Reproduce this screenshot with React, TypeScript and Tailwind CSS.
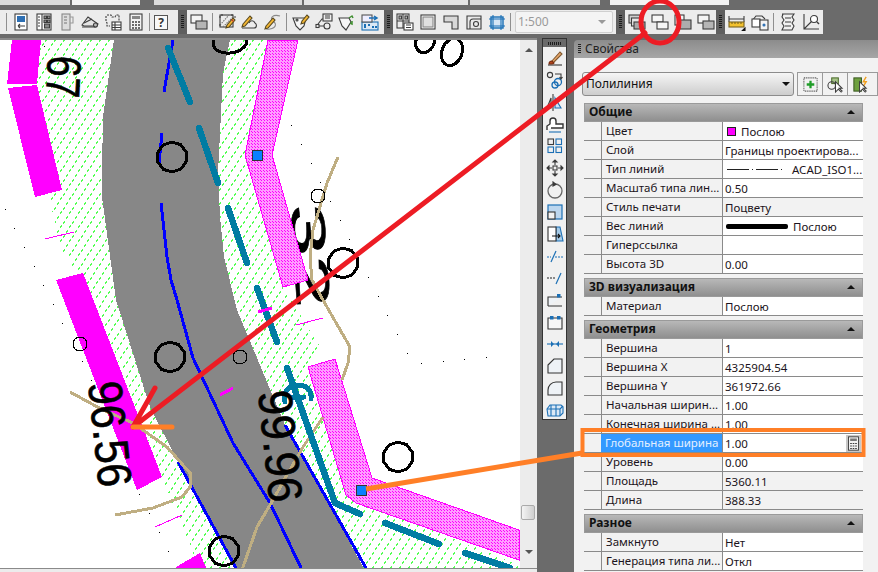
import React from "react";

const F = { fontFamily: '"Noto Sans", "DejaVu Sans", sans-serif' };

function I({ children, s = 18 }: { children: React.ReactNode; s?: number }) {
  return (
    <svg width={s} height={s} viewBox="0 0 18 18" fill="none" stroke="#3c3c3c" strokeWidth="1.1">
      {children}
    </svg>
  );
}
const Slot = ({ children }: { children: React.ReactNode }) => (
  <div className="w-[23px] h-full flex items-center justify-center shrink-0">{children}</div>
);
const Sep = () => <div className="w-px h-[18px] bg-[#8f8f8f] mx-[2px] shrink-0" />;
const Grip = () => (
  <div className="w-[9px] h-full bg-[#5f5f5f] shrink-0 flex items-center justify-center">
    <div className="w-[3px] h-[14px] bg-[repeating-linear-gradient(#1c1c1c_0,#1c1c1c_1px,#5f5f5f_1px,#5f5f5f_2px)]" />
  </div>
);
const Pencil = () => (
  <>
    <path d="M8 15l1-3 6-7 2 2-6 7z" fill="#f2b632" stroke="#5a4a20" />
    <path d="M13.5 6.5l2 2" stroke="#c0392b" />
  </>
);
const Over = ({ a = false }: { a?: boolean }) => (
  <>
    <rect x="1" y="2" width="11" height="8" fill={a ? "#d8d8d8" : "#f4f4f4"} />
    <rect x="6" y="8" width="11" height="8" fill={a ? "#f4f4f4" : "#b5b5b5"} />
  </>
);

const group1 = [
  <I key="a"><rect x="3" y="1" width="12" height="16" fill="#fff" /><rect x="5" y="3" width="8" height="6" fill="#2d6fb3" stroke="none" /><path d="M6 13h7M6 13l2-2M6 13l2 2" /></I>,
  <I key="b"><rect x="2" y="1" width="14" height="16" fill="#fff" /><path d="M7 1v16" /><rect x="9" y="3" width="2.5" height="2.5" fill="#999" /><rect x="12.5" y="3" width="2.5" height="2.5" fill="#999" /><rect x="9" y="7" width="2.5" height="2.5" fill="#999" /><rect x="12.5" y="7" width="2.5" height="2.5" fill="#999" /><rect x="9.5" y="11" width="5" height="4" fill="#888" /><path d="M3 4h2M3 7h2M3 10h2M3 13h2" /></I>,
  <I key="c"><rect x="4" y="1" width="8" height="16" fill="#ddd" stroke="#888" /><path d="M12 4h3v6h-3" stroke="#999" /><path d="M6 4h3M6 7h3M6 10h3" stroke="#777" /></I>,
  <I key="d"><path d="M1 12l6-8 10 7-3 2H3z" fill="#e4e4e4" /><path d="M1 14h14M3 10l8-4" /><circle cx="14.5" cy="12" r="2" fill="#bbb" /></I>,
  <I key="e"><path d="M3 2h4l1 2h3l1-2h3v6M2 3v5l1 2v3h3" strokeDasharray="2 1" /><rect x="8" y="9" width="9" height="8" fill="#fff" /><path d="M8 12h9M8 14.5h9M11 9v8" /></I>,
  <I key="f"><rect x="3" y="1" width="12" height="16" fill="#f2f2f2" /><rect x="5" y="3" width="8" height="3" fill="#888" stroke="none" /><path d="M5 9h2M8 9h2M11 9h2M5 12h2M8 12h2M11 12h2M5 15h2M8 15h2M11 15h2" strokeWidth="1.4" /></I>,
];
const group2 = [
  <I key="a"><rect x="2" y="2" width="13" height="12" /><path d="M2 12l9-10M5 14l10-10M8 14l7-6" stroke="#777" strokeDasharray="1.5 1" /><path d="M1 4h2M4 1v2M14 1v2M16 4h2M1 12h2" /><Pencil /></I>,
  <I key="b"><path d="M1 15h12c3 0 3-4 1-5-1-3-5-3-6 0" /><path d="M2 11l7-8 2 2-7 8-3 1z" fill="#f2b632" stroke="#5a4a20" /></I>,
  <I key="c"><path d="M16 3C9 1 5 5 9 8s3 7-3 8-4-2-3-3" stroke="#8a8a8a" /><path d="M2 13l7-8 2 2-7 8-3 1z" fill="#f2b632" stroke="#5a4a20" /></I>,
];
const group3 = [
  <I key="a"><path d="M1 5h13l-2 8-4 4-4-4z" fill="#f6f6f6" /><circle cx="5" cy="7" r="1" /><path d="M9 11l1-3 5-6 2 2-5 6z" fill="#f2b632" stroke="#5a4a20" /></I>,
  <I key="b"><rect x="8" y="1" width="9" height="7" fill="#eee" /><path d="M10 3h5M10 5h5" /><circle cx="12" cy="13" r="3" /><rect x="1" y="11.5" width="3" height="3" /><path d="M4 13h5M3 11l4-5h1" /></I>,
  <I key="c"><path d="M1 5h10l2 4-5 8-4-4z" fill="#f6f6f6" /><path d="M11 5l3-2 1 2M14 8v3l-2-1" stroke="#3f8f2f" strokeWidth="1.5" /></I>,
  <I key="d"><rect x="1" y="9" width="16" height="8" fill="#dbe8f5" stroke="#1b6fb5" /><rect x="1" y="2" width="10" height="7" fill="#eef" stroke="#555" /><path d="M8 5h7M13 3l3 2-3 2" stroke="#1b6fb5" strokeWidth="1.5" /><path d="M3 12h2M7 12h2M11 14h2M14 14h2M3 14h2" stroke="#1b6fb5" strokeWidth="2" /></I>,
];
const group4 = [
  <I key="a"><rect x="1" y="1" width="12" height="14" /><path d="M7 1v14M1 8h12" /><rect x="3" y="3" width="2.5" height="3" fill="#bbb" /><rect x="9" y="3" width="2.5" height="3" fill="#bbb" /><rect x="8" y="10" width="9" height="7" fill="#fff" /><path d="M10 12h5M10 14.500h5" /></I>,
  <I key="b"><rect x="2" y="2" width="14" height="14" fill="#fff" /><rect x="4" y="4" width="10" height="10" fill="#e0e0e0" stroke="#888" /></I>,
  <I key="c"><path d="M2 3h14v13h-6V9H2z" fill="#d8d8d8" /></I>,
  <I key="d"><path d="M2 3h14v13H2z" fill="#e8e8e8" /><path d="M5 16V9a3 3 0 013-3h8" /><circle cx="11" cy="11" r="2.500" /></I>,
  <I key="e"><rect x="3" y="4" width="12" height="11" fill="#d6e6f6" stroke="#1b6fb5" strokeWidth="1.4" /><path d="M1 6h16M1 13h16M5 2v15M13 2v15" stroke="#1b6fb5" /></I>,
];
const group5 = [
  <I key="a"><rect x="1" y="2" width="11" height="8" fill="#d0d0d0" /><rect x="3.500" y="5" width="11" height="8" fill="#e6e6e6" /><rect x="6" y="9" width="11" height="7" fill="#aaa" /></I>,
  <I key="b"><rect x="1" y="2" width="11" height="7" fill="#f6f6f6" /><rect x="6" y="9" width="11" height="7" fill="#f6f6f6" /></I>,
  <I key="c"><rect x="1" y="2" width="9" height="10" fill="#f4f4f4" /><rect x="6" y="7" width="11" height="9" fill="#adadad" /></I>,
  <I key="d"><Over /></I>,
];
const group6 = [
  <I key="a"><path d="M1 3v6M16 3v6M1 6h15" /><rect x="1" y="9" width="15" height="5" fill="#f2c12e" stroke="#7a6420" /><path d="M4 9v2M7 9v2M10 9v2M13 9v2" stroke="#7a6420" /><path d="M14 18l3-3v3z" fill="#111" stroke="#111" /></I>,
  <I key="b"><path d="M1 8l4-5h6l3 3" fill="#eee" /><rect x="1" y="6" width="8" height="8" fill="#fff" /><rect x="9" y="7" width="8" height="10" fill="#f4f4f4" /><circle cx="13" cy="12" r="1" fill="#2d6fb3" stroke="#2d6fb3" /></I>,
  <I key="c"><path d="M3 1h12l-2 3 2 3-2 3 2 3-2 4H3l2-4-2-3 2-3-2-3 1-3z" fill="#f1f1f1" /><path d="M6 5h6M6 9h6M6 13h6" /></I>,
  <I key="d"><path d="M2 1v15h15M2 16L12 6" /><circle cx="12" cy="6" r="3.500" fill="#fff" /><path d="M15 9l2 2" strokeWidth="1.500" /></I>,
];

const B = "#1b6fb5";
const strip = [
  <I key="0"><path d="M2 16h14" stroke="#333" /><path d="M5 13l9-10 2 2-9 9z" fill="#e8a66b" stroke="#805a30" /><path d="M3 15c0-3 2-3 3-3l2 2c0 1-2 1-5 1z" fill="#b5471d" stroke="#7a2c10" /></I>,
  <I key="1"><circle cx="4" cy="4" r="2.600" /><circle cx="12" cy="11" r="3.500" stroke={B} strokeWidth="1.300" /><circle cx="9" cy="14" r="3" stroke={B} strokeWidth="1.300" /><path d="M9 3h6v4M13.500 6l1.500 2 1.500-2" /></I>,
  <I key="2"><path d="M7 1v17" /><path d="M5 5l-4 10h4z" /><path d="M9 5l6 10H9z" stroke={B} fill="#cfe3f5" /></I>,
  <I key="3"><path d="M1 15v-4l3-2V6a3 3 0 016 0v3h7v4H5" fill="#fff" stroke="#333" strokeWidth="1.400" /><path d="M3 17h12" stroke={B} /></I>,
  <I key="4"><rect x="2" y="2" width="5.500" height="5.500" /><rect x="10" y="2" width="5.500" height="5.500" stroke={B} /><rect x="2" y="10" width="5.500" height="5.500" stroke={B} /><rect x="10" y="10" width="5.500" height="5.500" stroke={B} /></I>,
  <I key="5"><rect x="7" y="7" width="4" height="4" /><path d="M9 1v5M9 12v5M1 9h5M12 9h5" /><path d="M7 3l2-2 2 2zM7 15l2 2 2-2zM3 7l-2 2 2 2zM15 7l2 2-2 2z" fill="#333" /></I>,
  <I key="6"><circle cx="9" cy="10" r="7" stroke="#666" strokeWidth="1.300" /><path d="M7 1l3 2.500L7 5z" fill="#333" /></I>,
  <I key="7"><rect x="2" y="2" width="14" height="14" fill="#bcd6ee" stroke={B} strokeWidth="1.200" /><rect x="2" y="9" width="7" height="7" fill="#f2f2f2" stroke="#333" /></I>,
  <I key="8"><path d="M10 2h4l3 14h-7z" fill="#a6cbe8" stroke={B} /><rect x="2" y="2" width="8" height="14" fill="#fff" stroke="#333" /><path d="M6 11h8M12 9l2 2-2 2" stroke="#111" /></I>,
  <I key="9"><path d="M1 10h4M9 10h8" stroke={B} strokeDasharray="2 1" /><path d="M5 15l5-11" stroke={B} strokeWidth="1.200" /></I>,
  <I key="10"><path d="M1 9h9" stroke="#222" strokeDasharray="2 1" /><path d="M10 15l5-11" stroke={B} strokeWidth="1.200" /></I>,
  <I key="11"><path d="M2 15V6h14M2 15h14" stroke="#333" fill="#eef2f6" /><rect x="11" y="3" width="3.500" height="3.500" fill={B} stroke="none" /></I>,
  <I key="12"><path d="M2 5h14v11H2z" fill="#f7f7f7" stroke="#333" /><rect x="4" y="3" width="3.500" height="3.500" fill={B} stroke="none" /><rect x="11" y="3" width="3.500" height="3.500" fill={B} stroke="none" /></I>,
  <I key="13"><path d="M1 9h16" stroke={B} /><path d="M5 6l3 3-3 3zM13 6l-3 3 3 3z" fill={B} stroke="none" /></I>,
  <I key="14"><path d="M2 8l6-6h8v14H2z" fill="#eef2f6" stroke="#333" /></I>,
  <I key="15"><path d="M2 16v-5a8 8 0 018-8h6v13z" fill="#eef2f6" stroke="#333" /></I>,
  <I key="16"><path d="M1 8l3-4h11l2 2v6l-3 3H2z" stroke={B} fill="#dbe8f5" /><path d="M1 8h13v7M14 8l3-3M5 4v11M10 4v11" stroke={B} /></I>,
];

type Row = { l: string; v?: string; gray?: boolean; kind?: string };
const sections: { t: string; rows: Row[] }[] = [
  {
    t: "Общие",
    rows: [
      { l: "Цвет", v: "Послою", kind: "color" },
      { l: "Слой", v: "Границы проектирова..." },
      { l: "Тип линий", v: "ACAD_ISO1...", kind: "ltype" },
      { l: "Масштаб типа лин...", v: "0.50" },
      { l: "Стиль печати", v: "Поцвету", gray: true },
      { l: "Вес линий", v: "Послою", kind: "weight" },
      { l: "Гиперссылка", v: "" },
      { l: "Высота 3D", v: "0.00" },
    ],
  },
  { t: "3D визуализация", rows: [{ l: "Материал", v: "Послою" }] },
  {
    t: "Геометрия",
    rows: [
      { l: "Вершина", v: "1" },
      { l: "Вершина X", v: "4325904.54" },
      { l: "Вершина Y", v: "361972.66" },
      { l: "Начальная ширин...", v: "1.00" },
      { l: "Конечная ширина ...", v: "1.00" },
      { l: "Глобальная ширина", v: "1.00", kind: "active" },
      { l: "Уровень", v: "0.00" },
      { l: "Площадь", v: "5360.11", gray: true },
      { l: "Длина", v: "388.33", gray: true },
    ],
  },
  { t: "Разное", rows: [{ l: "Замкнуто", v: "Нет" }, { l: "Генерация типа ли...", v: "Откл" }] },
];

function PropRow({ r }: { r: Row }) {
  const active = r.kind === "active";
  return (
    <div className="flex h-[19px] border-b border-[#8a8a8a] pl-[17px] text-[11.5px] leading-[17px] text-[#1c1420]">
      <div
        className={
          active
            ? "w-[122px] shrink-0 pl-[4px] bg-[#3399ff] text-[#e4f0ff] whitespace-nowrap overflow-hidden border-r border-[#8a8a8a]"
            : "w-[122px] shrink-0 pl-[4px] border-l border-[#8a8a8a] border-r whitespace-nowrap overflow-hidden"
        }
      >
        {r.l}
      </div>
      <div className={(r.gray ? "" : "bg-white ") + "flex-1 pl-[2px] flex items-center gap-[5px] whitespace-nowrap overflow-hidden"}>
        {r.kind === "color" && <div className="w-[9px] h-[9px] bg-[#ff00ff] border border-[#222] ml-[2px]" />}
        {r.kind === "ltype" && (
          <div className="w-[60px] ml-[2px] flex items-center gap-[3px]">
            <div className="w-[22px] h-px bg-[#222]" />
            <div className="w-px h-px bg-[#222]" />
            <div className="w-[22px] h-px bg-[#222]" />
            <div className="w-px h-px bg-[#222]" />
          </div>
        )}
        {r.kind === "weight" && <div className="w-[62px] h-[5px] rounded-[2px] bg-black ml-[1px]" />}
        <span>{r.v}</span>
        {active && (
          <div className="ml-auto mr-[2px] w-[15px] h-[17px] bg-[#c8c8c8] flex items-center justify-center">
            <I s={15}><rect x="3" y="1" width="12" height="16" fill="#f2f2f2" /><rect x="5" y="3" width="8" height="3" fill="#777" stroke="none" /><path d="M5 9h2M8 9h2M11 9h2M5 12h2M8 12h2M11 12h2M5 15h2M8 15h2M11 15h2" strokeWidth="1.400" /></I>
          </div>
        )}
      </div>
    </div>
  );
}

const dots: [number, number][] = [
  [5,209],[14,228],[24,247],[34,266],[43,285],[53,304],[62,323],[82,361],[91,380],[139,494],[149,513],[159,532],[168,551],
  [291,125],[301,144],[311,163],[320,182],[330,201],[340,220],[349,239],[368,277],[378,296],[387,315],[397,334],[407,353],[421,363],[443,361],[464,359],[486,357],[44,46],
];
const circles: [number, number][] = [[172,157],[343,263],[170,357],[398,457],[224,551]];
const thin: [number, number][] = [[318,196],[80,344],[240,357]];
const teal = [
  "M168 48L190 102","M199 128L218 183","M228 208L247 263","M257 288L277 342",
  "M287 368L335 503L360 514","M385 523L439 544","M465 553L510 568",
];
const deca = (x: number, y: number) =>
  Array.from({ length: 10 }, (_, i) => {
    const a = (i * Math.PI) / 5 + 0.3;
    return `${(x + 15 * Math.cos(a)).toFixed(1)},${(y + 15 * Math.sin(a)).toFixed(1)}`;
  }).join(" ");
const pink1 = "268,40 298,40 272,155 308,280 283,287 245,155";
const pink2 = "308,367 335,359 372,478 519,530 519,560 356,503 346,495";

function Drawing() {
  return (
    <svg width="520" height="528" viewBox="0 40 520 528" className="block" shapeRendering="crispEdges">
      <defs>
        <pattern id="g" width="9" height="14" patternUnits="userSpaceOnUse">
          <path d="M0 14l1.500-2.500M3 9l1.500-2.500M6 4l1.500-2.500" stroke="#55ff55" strokeWidth="1.200" fill="none" />
        </pattern>
        <pattern id="p" width="3" height="3" patternUnits="userSpaceOnUse">
          <rect width="1" height="1" fill="#ff00ff" />
          <rect x="1.500" y="1.500" width="1" height="1" fill="#ff00ff" />
        </pattern>
      </defs>
      <rect x="0" y="40" width="520" height="528" fill="#fff" />
      <polygon fill="url(#g)" points="40,40 268,40 245,155 283,287 322,350 308,367 346,495 519,565 519,570 200,570 162,477 95,300 60,247 50,200 37,83" />
      <polygon fill="#878787" points="114,40 230,40 223,73 218,173 220,217 224,257 237,310 262,370 285,425 366,572 236,572 178,462 150,407 116,300 102,197 102,170 103,117" />
      <g fontFamily='"Liberation Sans", sans-serif' fill="#000" stroke="#000" strokeWidth="0.600" fontSize="48">
        <text transform="translate(290,205) rotate(86)" textLength="104" lengthAdjust="spacingAndGlyphs">32</text>
      </g>
      <polygon fill="#ff9cff" points={pink1} />
      <polygon fill="#ff9cff" points={pink2} />
      <polygon fill="url(#p)" stroke="#ff00ff" points={pink1} />
      <polygon fill="url(#p)" stroke="#ff00ff" points={pink2} />
      <g fill="#ff00ff">
        <polygon points="12,40 41,40 37,84 7,84" />
        <polygon points="8,88 37,85 62,190 35,197" />
        <polygon points="56,280 83,273 162,477 137,490" />
        <polygon points="176,567 200,553 207,570 176,570" />
      </g>
      <g fill="none" stroke="#0000ff" strokeWidth="3">
        <path d="M173 40L164 92" />
        <path d="M162 133L159 163" />
        <path d="M161 203L167 257L171 280L177 300L193 358L233 443L270 503L302 570" />
        <path d="M178 462L236 568" />
        <path d="M285 425L366 568" />
      </g>
      <g fill="none" stroke="#bfae82" strokeWidth="3">
        <path d="M338 157L327 183L313 230L310 257L312 280L323 300L350 347L348 363L342 380" />
        <path d="M323 417L303 447L270 505L257 527L242 570" />
        <path d="M70 392L103 410L133 423L167 447L190 473L190 487L182 497L153 508L115 515" />
      </g>
      <g fill="none" stroke="#007ca3" strokeWidth="6.500" strokeLinecap="round" strokeLinejoin="round">
        {teal.map((d) => <path key={d} d={d} />)}
        <path d="M285 402C283 388 292 385 298 386C306 384 312 390 311 399M291 397H304" strokeWidth="5" />
      </g>
      <g fill="none" stroke="#000" strokeWidth="3">
        {circles.map(([x, y]) => <polygon key={x} points={deca(x, y)} />)}
        <ellipse cx="230" cy="42" rx="17" ry="11" transform="rotate(-8 230 42)" />
        <ellipse cx="425" cy="42" rx="9" ry="11" transform="rotate(25 425 42)" />
        <ellipse cx="452" cy="52" rx="10" ry="14" transform="rotate(20 452 52)" />
      </g>
      <g fill="none" stroke="#000" strokeWidth="1">
        {thin.map(([x, y]) => <circle key={x} cx={x} cy={y} r="7" />)}
      </g>
      <g fill="#000" stroke="#000" strokeWidth="0.600" fontFamily='"Liberation Sans", sans-serif' fontSize="48">
        <text transform="translate(48,55) rotate(93)" textLength="42" lengthAdjust="spacingAndGlyphs">67</text>
        <text transform="translate(88,383) rotate(84)" textLength="106" lengthAdjust="spacingAndGlyphs">96.56</text>
        <text transform="translate(258,392) rotate(84)" textLength="112" lengthAdjust="spacingAndGlyphs">99.96</text>
      </g>
      <g fill="#000">
        {dots.map(([x, y]) => <rect key={x + "-" + y} x={x} y={y} width="1" height="1" />)}
      </g>
      <g stroke="#ff00ff" fill="none">
        <path d="M45 239L74 232M155 527L182 515M296 325L323 318" />
        <path d="M220 395L233 388M258 312L272 308" strokeWidth="3" />
      </g>
      <rect x="252.500" y="150.500" width="10" height="10" fill="#0a80ff" stroke="#333" />
      <rect x="356.500" y="485.500" width="10" height="10" fill="#0a80ff" stroke="#333" />
    </svg>
  );
}

export default function App() {
  return (
    <div className="relative w-[878px] h-[572px] overflow-hidden bg-[#6b6b6b] flex flex-col" style={F}>
      <div className="h-[38px] shrink-0 flex flex-col">
        <div className="h-[5px] flex gap-[2px]">
          <div className="w-[70px] bg-[#dcdcdc]" />
          <div className="w-[68px] bg-[#f4f4f4]" />
          <div className="w-[10px]" />
          <div className="w-[148px] bg-[#dcdcdc]" />
          <div className="w-[164px] bg-[#e4e4e4]" />
          <div className="w-[130px] bg-[#dcdcdc]" />
          <div className="w-[6px]" />
          <div className="w-[119px] bg-[#f4f4f4]" />
        </div>
        <div className="mt-[5px] h-[24px] flex">
          <div className="w-[178px] bg-[#ececec] flex items-center pl-[6px] shrink-0">
            <div className="w-px h-[18px] bg-[#8f8f8f] mr-[2px]" />
            {group1.map((g, i) => <Slot key={i}>{g}</Slot>)}
            <Sep />
            <div className="w-[14px] h-[15px] ml-[2px] border border-[#555] bg-[#f8f8f8] text-[12px] leading-[13px] font-bold text-center text-[#333]">?</div>
          </div>
          <Grip />
          <div className="w-[197px] bg-[#ececec] flex items-center shrink-0">
            <Slot><I><Over /></I></Slot>
            <Sep />
            {group2.map((g, i) => <Slot key={i}>{g}</Slot>)}
            <Sep />
            {group3.map((g, i) => <Slot key={i}>{g}</Slot>)}
          </div>
          <Grip />
          <div className="w-[223px] bg-[#ececec] flex items-center shrink-0">
            {group4.map((g, i) => <Slot key={i}>{g}</Slot>)}
            <Sep />
            <div className="ml-[2px] w-[98px] h-[22px] bg-[#f4f4f4] border border-[#cfcfcf] rounded-[2px] flex items-center pl-[2px] text-[12px] text-[#9a9a9a]">
              1:500
              <div className="ml-auto mr-[6px] w-0 h-0 border-x-[4px] border-x-transparent border-t-[4px] border-t-[#999]" />
            </div>
          </div>
          <Grip />
          <div className="w-[91px] bg-[#ececec] flex items-center shrink-0">
            {group5.map((g, i) => <Slot key={i}>{g}</Slot>)}
          </div>
          <Grip />
          <div className="w-[98px] bg-[#ececec] flex items-center shrink-0">
            {group6.slice(0, 2).map((g, i) => <Slot key={i}>{g}</Slot>)}
            <Sep />
            {group6.slice(2).map((g, i) => <Slot key={i}>{g}</Slot>)}
          </div>
        </div>
      </div>

      <div className="flex-1 flex min-h-0">
        <div className="w-[537px] shrink-0 flex flex-col">
          <div className="h-[2px] bg-[#8a8a8a]" />
          <div className="h-[528px] flex">
            <Drawing />
            <div className="w-[17px] bg-[#ececec] flex flex-col items-center relative">
              <div className="mt-[8px] w-0 h-0 border-x-[4px] border-x-transparent border-b-[4px] border-b-[#555]" />
              <div className="mt-[453px] w-[14px] h-[15px] rounded-[2px] border border-[#aaa] bg-linear-to-r from-[#f4f4f4] to-[#cfcfcf] -ml-[2px]" />
              <div className="mt-[30px] w-0 h-0 border-x-[4px] border-x-transparent border-t-[4px] border-t-[#555]" />
            </div>
          </div>
          <div className="h-[4px] bg-[#ececec] border-t border-[#8a8a8a]" />
        </div>

        <div className="ml-[5px] w-[25px] h-[382px] shrink-0 bg-[#f0f0f0] border border-[#333] flex flex-col items-center">
          <div className="w-full h-[8px] bg-[#6a6a6a] shrink-0 flex items-center justify-center">
            <div className="w-[14px] h-[3px] bg-[repeating-linear-gradient(90deg,#1c1c1c_0,#1c1c1c_1px,#6a6a6a_1px,#6a6a6a_2px)]" />
          </div>
          {strip.map((g, i) => <div key={i} className="h-[22px] flex items-center justify-center shrink-0">{g}</div>)}
        </div>

        <div className="ml-[7px] flex-1 flex flex-col mt-[2px]">
          <div className="h-[18px] bg-linear-to-b from-[#8c8c8c] to-[#a6a6a6] rounded-tl-[4px] flex items-center text-[12px] text-[#222] pl-[4px] gap-[4px] shrink-0">
            <div className="w-[3px] h-[10px] bg-[repeating-linear-gradient(#222_0,#222_1px,#999_1px,#999_2px)]" />
            Свойства
          </div>
          <div className="flex-1 bg-[#f2f2f2] pl-[10px] pr-[15px] pt-[14px] overflow-hidden">
            <div className="flex gap-[3px] -ml-[2px] -mr-[15px] h-[24px]">
              <div className="w-[212px] shrink-0 border border-[#8c8c8c] rounded-[3px] bg-linear-to-b from-[#f6f6f6] to-[#cdcdcd] flex items-center pl-[3px] text-[12px] text-[#111]">
                Полилиния
                <div className="ml-auto mr-[3px] w-0 h-0 border-x-[4px] border-x-transparent border-t-[4px] border-t-[#111]" />
              </div>
              <div className="flex-1 flex border border-[#9a9a9a]">
                <div className="w-[25px] flex items-center justify-center border-r border-[#9a9a9a]"><I s={17}><rect x="2" y="2" width="14" height="14" strokeDasharray="1 1" /><path d="M9 5v8M5 9h8" stroke="#1f9d28" strokeWidth="2.400" /></I></div>
                <div className="w-[25px] flex items-center justify-center border-r border-[#9a9a9a]"><I s={17}><rect x="5" y="2" width="7" height="6" fill="#a7c48a" stroke="#4a6a2a" /><circle cx="5" cy="10" r="4" /><path d="M9 6v11l3-3 3 3 1-1-3-3h3z" fill="#fff" /></I></div>
                <div className="w-[25px] flex items-center justify-center"><I s={17}><rect x="2" y="2" width="8" height="14" fill="#6ea03f" stroke="#3b5a20" /><path d="M15 1l-3 5h3l-3 5" stroke="#f2a020" strokeWidth="1.500" /><path d="M8 6v11l3-3 3 3 1-1-3-3h3z" fill="#fff" /></I></div>
              </div>
            </div>
            <div className="mt-[7px] flex flex-col gap-[4px]">
              {sections.map((s) => (
                <div key={s.t}>
                  <div className="h-[19px] bg-linear-to-b from-[#b8b8b8] to-[#8f8f8f] border border-[#9a9a9a] flex items-center pl-[4px] pb-[1px] text-[12px] leading-none font-bold text-[#111]">
                    {s.t}
                    <div className="ml-auto mr-[7px] w-0 h-0 border-x-[4px] border-x-transparent border-b-[4px] border-b-[#111]" />
                  </div>
                  {s.rows.map((r) => <PropRow key={r.l} r={r} />)}
                </div>
              ))}
            </div>
          </div>
        </div>
      </div>

      <svg width="878" height="572" viewBox="0 0 878 572" fill="none" className="absolute left-0 top-0 pointer-events-none">
        <ellipse cx="660" cy="22" rx="19" ry="21" stroke="#ed1c24" strokeWidth="5" />
        <path d="M645 33L133 427M155 388L133 427" stroke="#ed1c24" strokeWidth="5" strokeLinecap="round" />
        <path d="M133 427H172" stroke="#ff7f27" strokeWidth="5" strokeLinecap="round" />
        <path d="M366 489L582 453" stroke="#ff7f27" strokeWidth="5" />
        <rect x="582.500" y="430" width="281" height="25" stroke="#ff7f27" strokeWidth="4" />
      </svg>
    </div>
  );
}
